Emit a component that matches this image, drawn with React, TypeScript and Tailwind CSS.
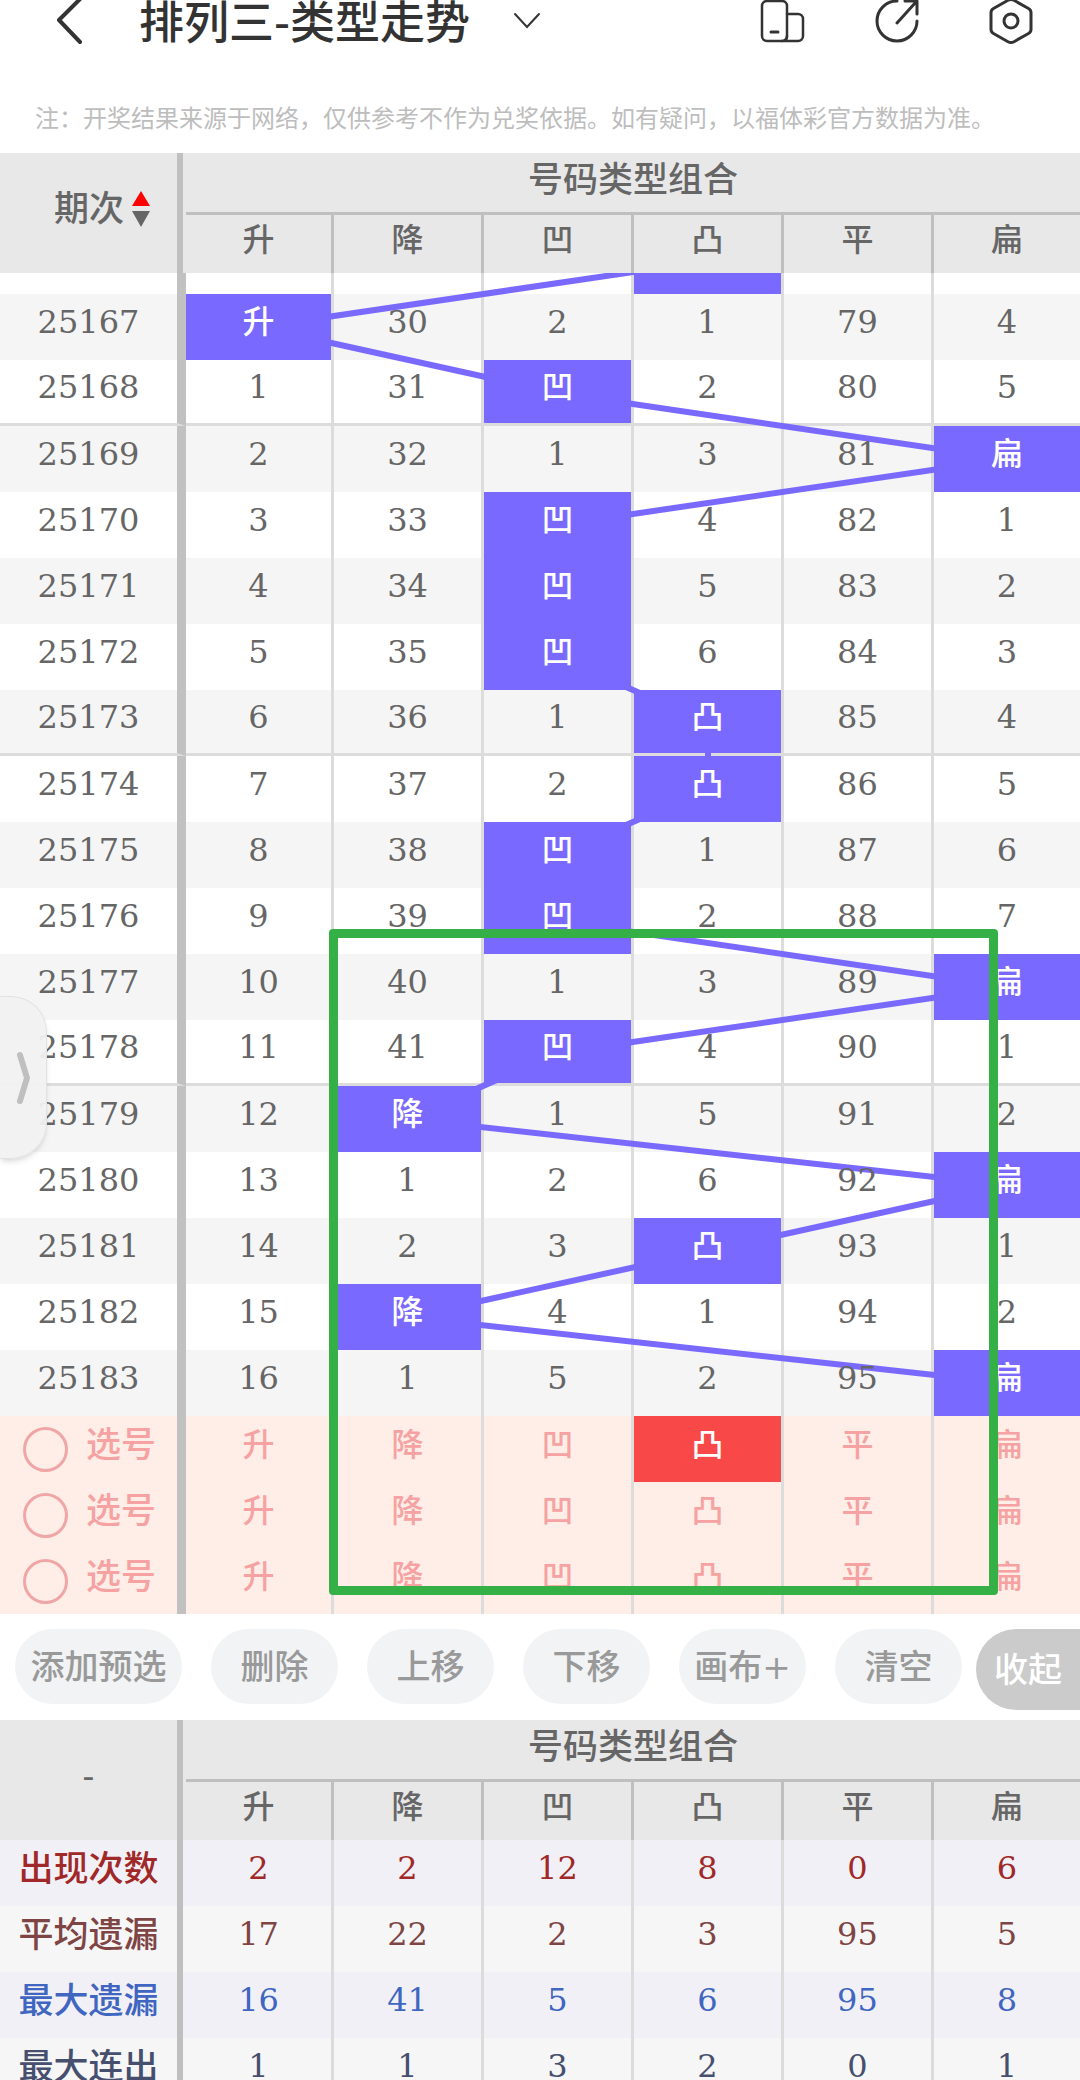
import React, { useState } from 'react';
import clsx from 'clsx';

interface TrendRow {
  issue: string;
  hit: number;
  misses: number[];
}

interface StatRow {
  label: string;
  values: number[];
  className: string;
}

const TYPES = ['升', '降', '凹', '凸', '平', '扁'];

// misses[hit] is not shown, the type name is drawn there instead
const TREND: TrendRow[] = [
  { issue: '25167', hit: 0, misses: [0, 30, 2, 1, 79, 4] },
  { issue: '25168', hit: 2, misses: [1, 31, 0, 2, 80, 5] },
  { issue: '25169', hit: 5, misses: [2, 32, 1, 3, 81, 0] },
  { issue: '25170', hit: 2, misses: [3, 33, 0, 4, 82, 1] },
  { issue: '25171', hit: 2, misses: [4, 34, 0, 5, 83, 2] },
  { issue: '25172', hit: 2, misses: [5, 35, 0, 6, 84, 3] },
  { issue: '25173', hit: 3, misses: [6, 36, 1, 0, 85, 4] },
  { issue: '25174', hit: 3, misses: [7, 37, 2, 0, 86, 5] },
  { issue: '25175', hit: 2, misses: [8, 38, 0, 1, 87, 6] },
  { issue: '25176', hit: 2, misses: [9, 39, 0, 2, 88, 7] },
  { issue: '25177', hit: 5, misses: [10, 40, 1, 3, 89, 0] },
  { issue: '25178', hit: 2, misses: [11, 41, 0, 4, 90, 1] },
  { issue: '25179', hit: 1, misses: [12, 0, 1, 5, 91, 2] },
  { issue: '25180', hit: 5, misses: [13, 1, 2, 6, 92, 0] },
  { issue: '25181', hit: 3, misses: [14, 2, 3, 0, 93, 1] },
  { issue: '25182', hit: 1, misses: [15, 0, 4, 1, 94, 2] },
  { issue: '25183', hit: 5, misses: [16, 1, 5, 2, 95, 0] }
];

const STATS: StatRow[] = [
  { label: '出现次数', values: [2, 2, 12, 8, 0, 6], className: 'bg-[#f1f0f6] text-[#a02828]' },
  { label: '平均遗漏', values: [17, 22, 2, 3, 95, 5], className: 'bg-[#f6f6f6] text-[#7f4545]' },
  { label: '最大遗漏', values: [16, 41, 5, 6, 95, 8], className: 'bg-[#f1f0f6] text-[#3f66c0]' },
  { label: '最大连出', values: [1, 1, 3, 2, 0, 1], className: 'bg-[#f6f6f6] text-[#46506e]' }
];

const ACTIONS = ['删除', '上移', '下移', '画布+', '清空'];

// The hit of the issue above the first full row, only its lower edge is on screen
const PREVIOUS_HIT = 3;
const ROW_HEIGHT = 66;
const STUB_HEIGHT = 21;
const COLUMN_CENTERS = [73, 222, 372, 522, 672, 821];

function TrendLines() {
  const points = [PREVIOUS_HIT, ...TREND.map(row => row.hit)]
    .map((hit, i) => `${COLUMN_CENTERS[hit]},${STUB_HEIGHT + (i - 0.5) * ROW_HEIGHT}`)
    .join(' ');

  return (
    <div className="absolute top-[120px] right-0 left-[186px] z-0 pointer-events-none">
      <svg viewBox="0 0 894 1143" preserveAspectRatio="none" className="block w-full h-[1143px]" aria-hidden="true">
        <polyline points={points} fill="none" stroke="#7a69ff" strokeWidth="6" vectorEffect="non-scaling-stroke" />
      </svg>
    </div>
  );
}

function Columns() {
  return (
    <colgroup>
      <col className="w-[186px]" />
      <col className="w-[148px]" />
      <col />
      <col />
      <col />
      <col />
      <col className="w-[146px]" />
    </colgroup>
  );
}

function TableHead({ children }: { children: React.ReactNode }) {
  return (
    <thead className="bg-[#e8e8e8] text-[#666]">
      <tr className="h-[62px]">
        <th rowSpan={2} className="p-0 font-medium">
          <div className="mr-[3px] h-[120px] border-r-[6px] border-[#bfbfbf] flex items-center pb-2">{children}</div>
        </th>
        <th colSpan={6} className="p-0 pb-1 border-b-[3px] border-[#bfbfbf] text-[35px] leading-none font-medium">
          号码类型组合
        </th>
      </tr>
      <tr className="h-[58px]">
        {TYPES.map(type => (
          <th key={type} className="p-0 pb-2 border-r-[3px] last:border-r-0 border-[#bfbfbf] text-[32px] leading-none font-medium">
            {type}
          </th>
        ))}
      </tr>
    </thead>
  );
}

function BackIcon() {
  return (
    <svg width="32" height="48" viewBox="0 0 32 48" fill="none" stroke="#333" strokeWidth="4" strokeLinecap="round" strokeLinejoin="round">
      <path d="M26 2 5 23 26 45" />
    </svg>
  );
}

function CompareIcon() {
  return (
    <svg width="46" height="46" viewBox="0 0 46 46" fill="none" stroke="#333" strokeWidth="2.500" strokeLinecap="round">
      <rect x="2" y="3" width="25" height="40" rx="5" />
      <path d="M27 16h11a5 5 0 0 1 5 5v17a5 5 0 0 1-5 5H22M27 38a5 5 0 0 1-3 5" />
      <path d="M11 34h7" strokeWidth="3" />
    </svg>
  );
}

function ShareIcon() {
  return (
    <svg width="46" height="46" viewBox="0 0 46 46" fill="none" stroke="#333" strokeWidth="3" strokeLinecap="round" strokeLinejoin="round">
      <path d="M23 3A20 20 0 1 0 43 23" />
      <path d="M23 25 42 4M31 3h12v13" />
    </svg>
  );
}

function SettingsIcon() {
  return (
    <svg width="46" height="48" viewBox="0 0 46 48" fill="none" stroke="#333" strokeWidth="3" strokeLinejoin="round">
      <path d="M20 3.300a6 6 0 0 1 6 0L40.500 11.500a5 5 0 0 1 2.500 4.500V32a5 5 0 0 1-2.500 4.500L26 44.700a6 6 0 0 1-6 0L5.500 36.500A5 5 0 0 1 3 32V16a5 5 0 0 1 2.500-4.500Z" />
      <circle cx="23" cy="24" r="7" />
    </svg>
  );
}

export default function App() {
  const [picks, setPicks] = useState<number[][]>([[3], [], []]);
  const [checked, setChecked] = useState([false, false, false]);

  const togglePick = (row: number, col: number) => {
    setPicks(picks.map((cols, i) => {
      if (i !== row) return cols;
      return cols.includes(col) ? cols.filter(c => c !== col) : [...cols, col];
    }));
  };

  const toggleChecked = (row: number) => {
    setChecked(checked.map((value, i) => (i === row ? !value : value)));
  };

  return (
    <div className="h-screen overflow-hidden bg-white text-[#666] font-['DejaVu_Serif','Noto_Sans_CJK_SC',serif]">
      <header className="h-[42px] flex items-center justify-between pl-[54px] pr-[46px] text-[#333]">
        <div className="flex items-center">
          <button aria-label="返回" className="mr-[53px]">
            <BackIcon />
          </button>
          <button className="flex items-center gap-[43px]">
            <h1 className="text-[45px] leading-none font-medium whitespace-nowrap">
              排列三<span className="font-['Noto_Sans_CJK_SC',sans-serif]">-</span>类型走势
            </h1>
            <svg width="28" height="18" viewBox="0 0 28 18" fill="none" stroke="#333" strokeWidth="2" strokeLinecap="round">
              <path d="M2 2 14 15 26 2" />
            </svg>
          </button>
        </div>
        <div className="flex items-center gap-[68px]">
          <button aria-label="对比"><CompareIcon /></button>
          <button aria-label="分享"><ShareIcon /></button>
          <button aria-label="设置"><SettingsIcon /></button>
        </div>
      </header>

      <p className="pt-[65px] pb-[22px] pl-[35px] text-2xl leading-none text-[#bdbdbd] whitespace-nowrap">
        注：开奖结果来源于网络，仅供参考不作为兑奖依据。如有疑问，以福体彩官方数据为准。
      </p>

      <div className="relative">
        <table className="w-full table-fixed border-separate border-spacing-0 text-center">
          <Columns />
          <TableHead>
            <button className="flex items-center gap-2 pl-[54px] text-[35px] leading-none">
              期次
              <svg width="18" height="36" viewBox="0 0 18 36" aria-hidden="true">
                <path d="M9 0 18 15H0Z" fill="#ff0000" />
                <path d="M9 36 18 20H0Z" fill="#666" />
              </svg>
            </button>
          </TableHead>
          <tbody>
            <tr className="h-[21px]">
              <td className="p-0 border-r-[9px] border-[#c1c1c1]"></td>
              {TYPES.map((type, col) => (
                <td
                  key={type}
                  className={clsx('p-0 border-r-[3px] last:border-r-0 border-[#dcdcdc]', col === PREVIOUS_HIT && 'bg-[#7a69ff]')}
                ></td>
              ))}
            </tr>
            {TREND.map((row, i) => {
              // a rule closes every group of five issues
              const rule = i % 5 === 1 && i < 15 && 'border-b-[3px] border-b-[#dcdcdc]';
              return (
                <tr key={row.issue} className={clsx('h-[66px] text-[32px] leading-none', i % 2 === 0 && 'bg-[#f5f5f5]')}>
                  <td className={clsx('p-0 pb-2.5 border-r-[9px] border-r-[#c1c1c1]', rule)}>{row.issue}</td>
                  {row.misses.map((miss, col) => (
                    <td
                      key={col}
                      className={clsx(
                        'p-0 pb-2.5 border-r-[3px] last:border-r-0 border-r-[#dcdcdc]',
                        col === row.hit && 'bg-[#7a69ff] text-white font-medium',
                        rule
                      )}
                    >
                      <span className="relative z-10">{col === row.hit ? TYPES[col] : miss}</span>
                    </td>
                  ))}
                </tr>
              );
            })}
            {picks.map((cols, row) => (
              <tr key={row} className="h-[66px] bg-[#feeee7] text-[#f6a2a2] leading-none">
                <td className="p-0 border-r-[9px] border-[#c1c1c1]">
                  <label className="flex items-center gap-[18px] pl-[23px] text-[35px] leading-none font-medium">
                    <input
                      type="checkbox"
                      checked={checked[row]}
                      onChange={() => toggleChecked(row)}
                      className="appearance-none size-[45px] shrink-0 rounded-full border-[3px] border-[#f0a6a6] checked:bg-[#f0a6a6]"
                    />
                    <span className="pb-2 whitespace-nowrap">选号</span>
                  </label>
                </td>
                {TYPES.map((type, col) => (
                  <td key={type} className="p-0 border-r-[3px] last:border-r-0 border-[#dcdcdc]">
                    <button
                      onClick={() => togglePick(row, col)}
                      className={clsx(
                        'block w-full h-[66px] pb-2 text-[32px] leading-none font-medium',
                        cols.includes(col) && 'bg-[#f94848] text-white'
                      )}
                    >
                      {type}
                    </button>
                  </td>
                ))}
              </tr>
            ))}
          </tbody>
        </table>

        <TrendLines />

        {/* Frame drawn by the user on the canvas */}
        <div className="absolute top-[776px] left-[329px] z-20 w-[669px] h-[666px] rounded-sm border-[9px] border-[#34b046] pointer-events-none"></div>

        {/* Drawer handle */}
        <button
          aria-label="展开"
          className="absolute top-[843px] left-0 z-20 w-[47px] h-[163px] pl-[16px] rounded-r-[36px] bg-[#f1f1f1]/95 border border-l-0 border-[#e2e2e2] shadow-md"
        >
          <svg width="16" height="54" viewBox="0 0 16 54" fill="none" stroke="#bfbfbf" strokeWidth="6" strokeLinecap="round" strokeLinejoin="round">
            <path d="M4 4 11 27 4 50" />
          </svg>
        </button>
      </div>

      <div className="flex items-start h-[106px] pt-[15px] pl-[15px] text-[34px] leading-none font-medium text-[#999] whitespace-nowrap">
        <div className="flex gap-[29px]">
          <button className="w-[167px] h-[75px] rounded-full bg-[#f1f3f5]">添加预选</button>
          {ACTIONS.map(action => (
            <button key={action} className="w-[127px] h-[75px] rounded-full bg-[#f1f3f5]">{action}</button>
          ))}
        </div>
        <button className="flex-1 h-[81px] ml-[14px] rounded-l-full bg-[#cbcbcb] text-white">收起</button>
      </div>

      <table className="w-full table-fixed border-separate border-spacing-0 text-center">
        <Columns />
        <TableHead>
          <span className="w-full text-[35px] leading-none">-</span>
        </TableHead>
        <tbody>
          {STATS.map(stat => (
            <tr key={stat.label} className={clsx('h-[66px] text-[32px] leading-none', stat.className)}>
              <th className="p-0 font-medium text-[35px] leading-none">
                <div className="mr-[3px] h-[66px] border-r-[6px] border-[#bfbfbf] flex items-center justify-center pb-2 whitespace-nowrap">
                  {stat.label}
                </div>
              </th>
              {stat.values.map((value, col) => (
                <td key={col} className="p-0 pb-2.5 border-r-[3px] last:border-r-0 border-[#dcdcdc]">{value}</td>
              ))}
            </tr>
          ))}
        </tbody>
      </table>
    </div>
  );
}
